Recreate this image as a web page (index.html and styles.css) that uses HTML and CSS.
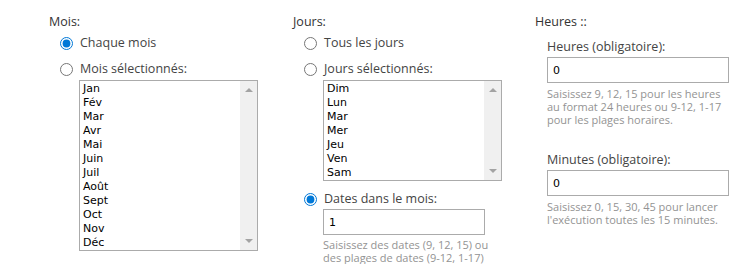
FILE: index.html
```html
<!DOCTYPE html>
<html lang="fr">
<head>
    <meta charset="UTF-8">
    <meta name="viewport" content="width=device-width, initial-scale=1.0">
    <title>Planification</title>
    <link rel="stylesheet" href="styles.css">
</head>
<body>
    <div class="schedule">
        <div class="col col-months">
            <div class="heading">Mois:</div>
            <label class="radio-row">
                <input type="radio" name="months" checked>
                <span>Chaque mois</span>
            </label>
            <label class="radio-row">
                <input type="radio" name="months">
                <span>Mois sélectionnés:</span>
            </label>
            <div class="listbox">
                <ul class="items">
                    <li>Jan</li>
                    <li>Fév</li>
                    <li>Mar</li>
                    <li>Avr</li>
                    <li>Mai</li>
                    <li>Juin</li>
                    <li>Juil</li>
                    <li>Août</li>
                    <li>Sept</li>
                    <li>Oct</li>
                    <li>Nov</li>
                    <li>Déc</li>
                </ul>
                <div class="scrollbar">
                    <span class="arrow up"></span>
                    <span class="arrow down"></span>
                </div>
            </div>
        </div>

        <div class="col col-days">
            <div class="heading">Jours:</div>
            <label class="radio-row">
                <input type="radio" name="days">
                <span>Tous les jours</span>
            </label>
            <label class="radio-row">
                <input type="radio" name="days">
                <span>Jours sélectionnés:</span>
            </label>
            <div class="listbox listbox-days">
                <ul class="items">
                    <li>Dim</li>
                    <li>Lun</li>
                    <li>Mar</li>
                    <li>Mer</li>
                    <li>Jeu</li>
                    <li>Ven</li>
                    <li>Sam</li>
                </ul>
                <div class="scrollbar">
                    <span class="arrow up"></span>
                    <span class="arrow down"></span>
                </div>
            </div>
            <label class="radio-row radio-dates">
                <input type="radio" name="days" checked>
                <span>Dates dans le mois:</span>
            </label>
            <div class="sub">
                <input type="text" class="field field-dates" value="1">
                <div class="help">
                    <span>Saisissez des dates (9, 12, 15) ou</span>
                    <span>des plages de dates (9-12, 1-17)</span>
                </div>
            </div>
        </div>

        <div class="col col-hours">
            <div class="heading">Heures ::</div>
            <div class="group">
                <label class="field-label">Heures (obligatoire):</label>
                <input type="text" class="field" value="0">
                <div class="help">
                    <span>Saisissez 9, 12, 15 pour les heures</span>
                    <span>au format 24 heures ou 9-12, 1-17</span>
                    <span>pour les plages horaires.</span>
                </div>
            </div>
            <div class="group group-minutes">
                <label class="field-label">Minutes (obligatoire):</label>
                <input type="text" class="field" value="0">
                <div class="help">
                    <span>Saisissez 0, 15, 30, 45 pour lancer</span>
                    <span>l'exécution toutes les 15 minutes.</span>
                </div>
            </div>
        </div>
    </div>
</body>
</html>
```

FILE: styles.css
```css
body {
    margin: 0;
    background: #ffffff;
    font-family: "Open Sans", "Noto Sans", sans-serif;
    font-size: 12.5px;
    color: #444;
}
.schedule {
    display: flex;
    padding: 13px 0 0 49px;
}
.col-months {
    width: 244px;
}
.col-days {
    width: 242px;
}
.col-hours {
    width: 200px;
}
.heading {
    height: 18px;
    line-height: 18px;
    color: #333;
}
.radio-row {
    display: flex;
    align-items: center;
    height: 18px;
    margin-top: 3px;
    margin-left: 11px;
    line-height: 18px;
}
.radio-row + .radio-row {
    margin-top: 8px;
}
.radio-row input {
    width: 13px;
    height: 13px;
    margin: 0 7px 0 0;
    accent-color: #0078d7;
}
.listbox {
    display: flex;
    width: 177px;
    margin: 2px 0 0 30px;
    border: 1px solid #ababab;
    background: #fff;
}
.items {
    flex: 1;
    list-style: none;
    margin: 0;
    padding: 1px 0 0 3px;
    font-family: "DejaVu Sans", Verdana, sans-serif;
    font-size: 11px;
    line-height: 14px;
    color: #000;
}
.scrollbar {
    width: 17px;
    background: #f0f0f0;
    display: flex;
    flex-direction: column;
    justify-content: space-between;
    align-items: center;
    padding: 7px 0;
}
.arrow {
    width: 0;
    height: 0;
    border-left: 4px solid transparent;
    border-right: 4px solid transparent;
}
.arrow.up {
    border-bottom: 4px solid #a3a3a3;
}
.arrow.down {
    border-top: 4px solid #a3a3a3;
}
.radio-dates {
    margin-top: 9px;
}
.sub {
    margin-left: 30px;
}
.field {
    display: block;
    box-sizing: border-box;
    width: 162px;
    height: 26px;
    margin-top: 1px;
    padding: 0 5px;
    border: 1px solid #ababab;
    font-family: "DejaVu Sans", Verdana, sans-serif;
    font-size: 11px;
    color: #000;
    outline: none;
}
.help {
    margin-top: 4px;
    font-size: 11px;
    color: #939393;
}
.help span {
    display: block;
    height: 13px;
    line-height: 13px;
}
.sub .help {
    margin-top: 3px;
}
.col-hours .group {
    margin-left: 12px;
}
.group {
    margin-top: 7px;
}
.field-label {
    display: block;
    height: 18px;
    line-height: 18px;
}
.col-hours .field {
    width: 182px;
}
.group-minutes {
    margin-top: 25px;
}
```
